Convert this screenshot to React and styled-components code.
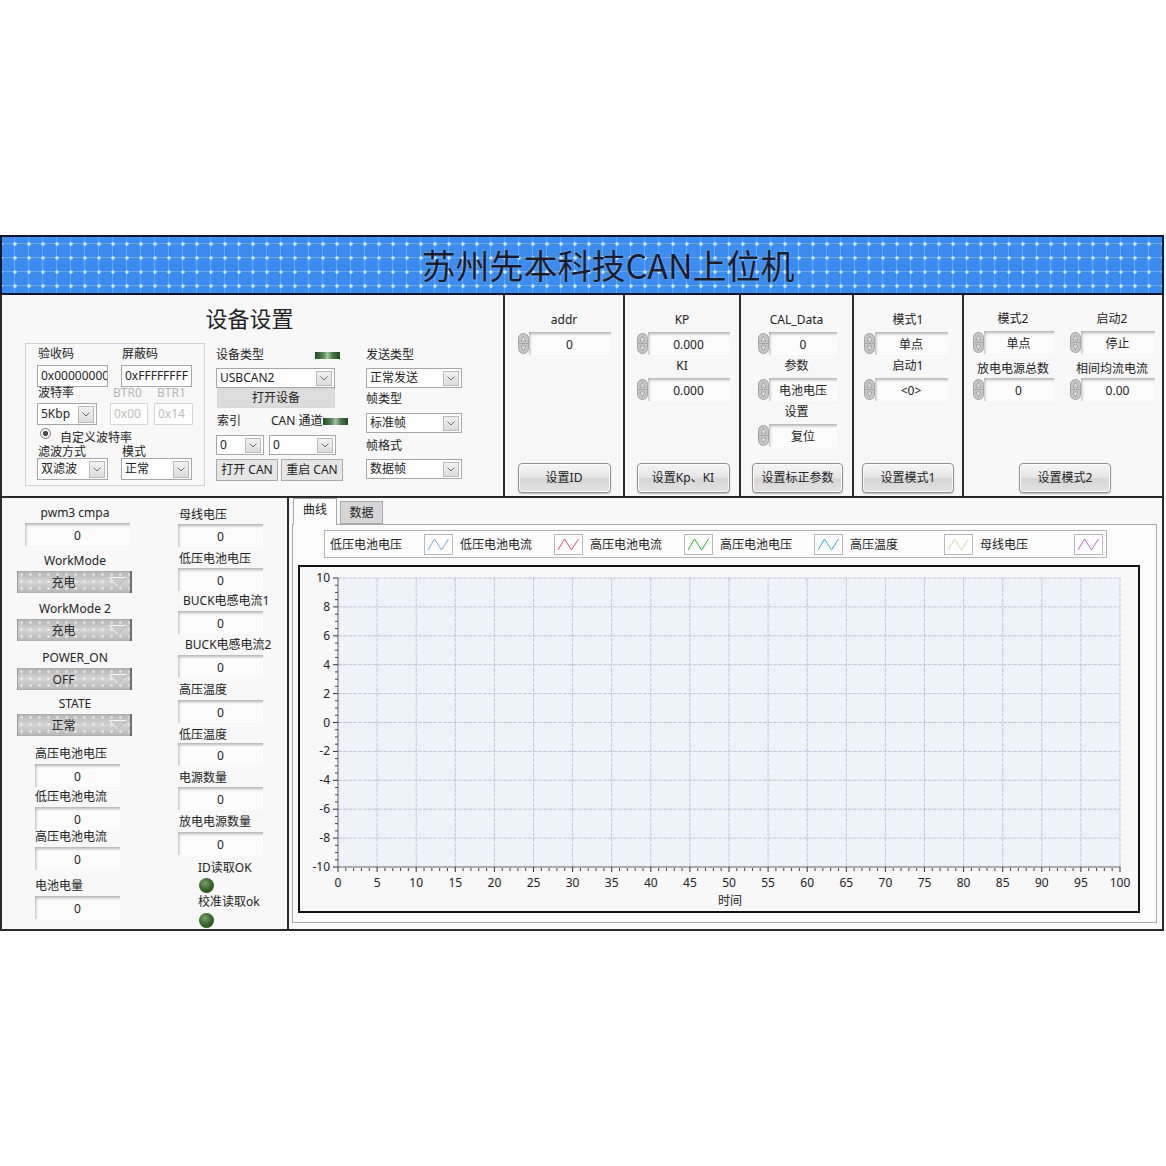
import React from 'react';
import styled, { createGlobalStyle } from 'styled-components';

const GlobalStyle = createGlobalStyle`
  html, body { margin: 0; padding: 0; background: #ffffff; }
  body {
    font-family: "Noto Sans", "Noto Sans CJK SC", sans-serif;
    font-size: 12px;
    color: #222;
  }
`;

const LINE = '#2b2b2b';

const Page = styled.div`
  width: 1164px;
  padding-top: 235px;
`;

/* ---------- banner ---------- */
const Banner = styled.header`
  box-sizing: border-box;
  height: 60px;
  border: 2px solid #0f1830;
  background-color: #3b8cee;
  background-image:
    radial-gradient(circle at 7px 7px, rgba(210, 233, 255, 0.95) 1.3px, transparent 2.2px),
    linear-gradient(to bottom, transparent 6.5px, rgba(140, 195, 255, 0.5) 6.5px, rgba(140, 195, 255, 0.5) 7.5px, transparent 7.5px),
    linear-gradient(to right, transparent 6.5px, rgba(140, 195, 255, 0.5) 6.5px, rgba(140, 195, 255, 0.5) 7.5px, transparent 7.5px);
  background-size: 14px 14px;
  background-position: 6px 0;
  display: flex;
  align-items: center;
  justify-content: center;
  padding-left: 52px;
`;

const BannerTitle = styled.h1`
  margin: 0;
  font-family: "Noto Sans CJK SC", sans-serif;
  font-weight: 400;
  font-size: 34px;
  line-height: 40px;
  color: #1a1c2c;
  text-shadow: 0 0 2px rgba(200, 225, 255, 0.6);
`;

/* ---------- panels ---------- */
const TopRow = styled.div`
  display: grid;
  grid-template-columns: 505px 120px 116px 113px 110px 200px;
  height: 203px;
`;

const BottomRow = styled.div`
  display: grid;
  grid-template-columns: 289px 875px;
  height: 433px;
`;

const Panel = styled.section`
  box-sizing: border-box;
  background: #f8f8f8;
  border-right: 2px solid ${LINE};
  border-bottom: 2px solid ${LINE};
  border-left: ${p => (p.$first ? `2px solid ${LINE}` : 'none')};
  min-width: 0;
`;

const Label = styled.div`
  font-size: 12px;
  line-height: ${p => p.$lh || 14}px;
  white-space: nowrap;
  color: ${p => (p.$muted ? '#b6b6b6' : '#222')};
  margin-top: ${p => p.$mt || 0}px;
  margin-left: ${p => p.$ml || 0}px;
  padding-left: ${p => p.$pl || 0}px;
`;

/* ---------- device settings ---------- */
const DevicePanel = styled(Panel)``;

const PanelTitle = styled.h2`
  margin: 0;
  height: 48px;
  font-size: 22px;
  font-weight: 400;
  line-height: 44px;
  text-align: center;
  padding-right: 6px;
  font-family: "Noto Sans CJK SC", sans-serif;
`;

const DeviceBody = styled.div`
  display: flex;
  align-items: flex-start;
  padding-left: 23px;
`;

const GroupBox = styled.div`
  box-sizing: border-box;
  width: 180px;
  height: 143px;
  border: 1px solid #d2d2d2;
  padding: 3px 0 0 11px;
`;

const PairRow = styled.div`
  display: grid;
  grid-template-columns: ${p => p.$cols || '71px 71px'};
  column-gap: ${p => p.$gap ?? 13}px;
  margin-top: ${p => p.$mt || 0}px;
  align-items: start;
`;

const TextBox = styled.div`
  box-sizing: border-box;
  width: ${p => p.$w}px;
  height: 22px;
  border: 1px solid ${p => (p.$muted ? '#d6d6d6' : '#a6a6a6')};
  background: #fff;
  padding-left: 3px;
  font-size: 12px;
  line-height: 20px;
  white-space: nowrap;
  overflow: hidden;
  color: ${p => (p.$muted ? '#bdbdbd' : '#222')};
`;

const ComboBox = styled.div`
  box-sizing: border-box;
  width: ${p => p.$w}px;
  height: ${p => p.$h || 20}px;
  border: 1px solid #a6a6a6;
  background: #fff;
  display: flex;
  align-items: center;
  justify-content: space-between;
  padding: 0 2px 0 3px;
  font-size: 12px;
  line-height: 14px;
  white-space: nowrap;
  overflow: hidden;
  margin-top: ${p => p.$mt || 0}px;
`;

const ComboArrow = styled.span`
  box-sizing: border-box;
  flex: none;
  width: 16px;
  height: ${p => p.$h || 15}px;
  border: 1px solid #b9b9b9;
  background: linear-gradient(#f2f2f2, #dcdcdc);
  display: flex;
  align-items: center;
  justify-content: center;
`;

const Combo = ({ w, h, mt, children }) => (
  <ComboBox $w={w} $h={h} $mt={mt}>
    <span>{children}</span>
    <ComboArrow $h={h && h > 20 ? 17 : 15}>
      <svg width="8" height="5" viewBox="0 0 8 5">
        <path d="M0.5 0.5 L4 4 L7.5 0.5" fill="none" stroke="#6d6d6d" strokeWidth="1" />
      </svg>
    </ComboArrow>
  </ComboBox>
);

const RadioRow = styled.div`
  display: flex;
  align-items: flex-start;
  margin-top: 3px;
  margin-left: 3px;
  height: 17px;
`;

const RadioDot = styled.span`
  box-sizing: border-box;
  width: 11px;
  height: 11px;
  border-radius: 50%;
  border: 1px solid #7a7a7a;
  background: radial-gradient(circle, #4a4a4a 0 2.4px, #f4f4f4 2.9px);
`;

const DevCol = styled.div`
  width: ${p => p.$w}px;
  margin-left: ${p => p.$ml}px;
  padding-top: ${p => p.$pt}px;
  display: flex;
  flex-direction: column;
`;

const LabelLine = styled.div`
  display: flex;
  align-items: center;
  height: 14px;
  margin-top: ${p => p.$mt || 0}px;
`;

const BarLed = styled.span`
  width: 25px;
  height: 7px;
  margin-left: ${p => p.$ml}px;
  background: linear-gradient(90deg, #1e4a1e, #5f8a5f 35%, #a6c4a6 50%, #4d784d 70%, #1e4a1e);
`;

const FlatButton = styled.div`
  box-sizing: border-box;
  width: ${p => p.$w}px;
  height: ${p => p.$h || 22}px;
  margin-left: ${p => p.$ml || 0}px;
  border: 1px solid ${p => (p.$soft ? '#d8d8d8' : '#a9a9a9')};
  background: ${p => (p.$soft ? '#dcdcdc' : '#e6e6e6')};
  text-align: center;
  font-size: 12px;
  line-height: ${p => (p.$h || 22) - 2}px;
  white-space: nowrap;
`;

const InlineRow = styled.div`
  display: flex;
  gap: ${p => p.$gap}px;
  margin-top: ${p => p.$mt || 0}px;
`;

/* ---------- spinners & silver buttons ---------- */
const SpinPanel = styled(Panel)`
  display: flex;
  flex-direction: column;
  align-items: center;
  padding-top: 18px;
`;

const SplitPanel = styled(Panel)`
  display: flex;
  flex-direction: column;
  align-items: center;
  padding-top: 17px;
`;

const SplitCols = styled.div`
  display: grid;
  grid-template-columns: 98px 100px;
  align-self: stretch;
`;

const SpinGroup = styled.div`
  display: flex;
  flex-direction: column;
  align-items: center;
  margin-top: ${p => p.$mt || 0}px;
`;

const SpinWrap = styled.div`
  display: flex;
  width: ${p => p.$w}px;
  height: 23px;
  margin-top: ${p => p.$gap ?? 5}px;
  margin-left: ${p => p.$ml || 0}px;
`;

const SpinValue = styled.div`
  flex: 1;
  height: 23px;
  background: #fcfcfc;
  box-shadow: inset 3px 4px 3px -2px #b3b3b3;
  text-align: center;
  font-size: 12px;
  line-height: 25px;
  white-space: nowrap;
`;

const IncDec = () => (
  <svg width="11" height="21" viewBox="0 0 11 21" style={{ flex: 'none', marginTop: 1 }}>
    <rect x="0.5" y="0.5" width="10" height="20" rx="5" fill="#c6c6c6" stroke="#a3a3a3" />
    <path d="M1 10.5 H10" stroke="#9c9c9c" strokeWidth="0.8" />
    <path d="M3.2 8 L5.5 3.2 L7.8 8 Z" fill="#eeeeee" stroke="#8c8c8c" strokeWidth="0.7" />
    <path d="M3.2 13 L5.5 17.8 L7.8 13 Z" fill="#eeeeee" stroke="#8c8c8c" strokeWidth="0.7" />
  </svg>
);

const Spinner = ({ label, value, w, mt, ml, gap }) => (
  <SpinGroup $mt={mt}>
    <Label>{label}</Label>
    <SpinWrap $w={w} $ml={ml} $gap={gap}>
      <IncDec />
      <SpinValue>{value}</SpinValue>
    </SpinWrap>
  </SpinGroup>
);

const PanelFoot = styled.div`
  margin-top: auto;
  margin-bottom: 3px;
  margin-left: ${p => p.$ml || 0}px;
`;

const SilverButton = styled.div`
  box-sizing: border-box;
  width: ${p => p.$w}px;
  height: 30px;
  border: 1px solid #8f8f8f;
  border-radius: 4px;
  background: linear-gradient(#f6f6f6 0%, #e6e6e6 45%, #d6d6d6 55%, #e3e3e3 100%);
  box-shadow: inset 0 0 0 1px #ffffff, 0 1px 1px rgba(0, 0, 0, 0.25);
  text-align: center;
  font-size: 12px;
  line-height: 28px;
  white-space: nowrap;
`;

/* ---------- readouts (bottom left) ---------- */
const ReadoutPanel = styled(Panel)`
  display: flex;
  padding-left: 15px;
`;

const StackCol = styled.div`
  display: flex;
  flex-direction: column;
  align-items: flex-start;
  width: ${p => p.$w}px;
  margin-left: ${p => p.$ml || 0}px;
  padding-top: ${p => p.$pt || 0}px;
`;

const CenterLabel = styled(Label)`
  align-self: center;
`;

const Readout = styled.div`
  box-sizing: border-box;
  width: ${p => p.$w}px;
  height: 23px;
  margin-top: ${p => p.$mt || 0}px;
  margin-left: ${p => p.$ml || 0}px;
  background: #fcfcfc;
  box-shadow: inset 3px 4px 3px -2px #b3b3b3;
  text-align: center;
  line-height: 25px;
  font-size: 12px;
`;

const Ring = styled.div`
  box-sizing: border-box;
  display: flex;
  align-items: center;
  width: 115px;
  height: 22px;
  margin-top: ${p => p.$mt || 0}px;
  background:
    radial-gradient(circle, rgba(255, 255, 255, 0.5) 1px, transparent 1.8px) 0 0 / 9px 7px,
    linear-gradient(#b3b3b3, #d4d4d4 50%, #b6b6b6);
  box-shadow: inset -2px 0 1px #6a6a6a, inset 1px 0 0 #9a9a9a;
  font-size: 12px;
`;

const RingText = styled.span`
  flex: 1;
  text-align: center;
  padding-left: 2px;
`;

const RingArrow = () => (
  <svg width="20" height="12" viewBox="0 0 20 12" style={{ marginRight: 4 }}>
    <path d="M1.5 1.5 H18.5 L10 10.5 Z" fill="#c9c9c9" stroke="#f6f6f6" strokeWidth="1" />
    <path d="M18.5 1.5 L10 10.5" stroke="#8a8a8a" strokeWidth="0.7" />
  </svg>
);

const Ringed = ({ value, mt }) => (
  <Ring $mt={mt}>
    <RingText>{value}</RingText>
    <RingArrow />
  </Ring>
);

const RoundLed = styled.span`
  width: 15px;
  height: 15px;
  border-radius: 50%;
  margin-top: ${p => p.$mt || 0}px;
  margin-left: ${p => p.$ml || 0}px;
  background: radial-gradient(circle at 40% 35%, #78a267 0, #3b6a2e 45%, #193d14 100%);
`;

/* ---------- graph panel ---------- */
const GraphPanel = styled(Panel)`
  display: flex;
  flex-direction: column;
  padding: 0 5px 6px 3px;
`;

const TabStrip = styled.div`
  display: flex;
  align-items: flex-end;
  height: 26px;
`;

const Tab = styled.div`
  box-sizing: border-box;
  position: relative;
  z-index: 1;
  width: ${p => p.$w}px;
  height: ${p => (p.$active ? 27 : 23)}px;
  margin-left: ${p => p.$ml}px;
  margin-bottom: ${p => (p.$active ? -1 : 0)}px;
  border: 1px solid #a9a9a9;
  border-bottom: ${p => (p.$active ? 'none' : '1px solid #a9a9a9')};
  background: ${p => (p.$active ? '#fbfbfb' : '#d6d6d6')};
  text-align: center;
  font-size: 12px;
  line-height: 22px;
`;

const TabBody = styled.div`
  flex: 1;
  box-sizing: border-box;
  border: 1px solid #a9a9a9;
  background: #fbfbfb;
`;

const Legend = styled.div`
  box-sizing: border-box;
  display: flex;
  align-items: center;
  width: 783px;
  height: 28px;
  margin: 5px 0 0 31px;
  padding-left: 5px;
  border: 1px solid #b3b3b3;
  background: #fdfdfd;
`;

const LegendItem = styled.div`
  display: flex;
  align-items: center;
  width: 130px;
  flex: none;
`;

const LegendText = styled.span`
  width: 94px;
  font-size: 12px;
  white-space: nowrap;
`;

const Swatch = styled.span`
  box-sizing: border-box;
  width: 29px;
  height: 21px;
  border: 1px solid #b8b8b8;
  background: #ffffff;
  display: flex;
`;

const GraphFrame = styled.div`
  box-sizing: border-box;
  width: 842px;
  height: 348px;
  margin: 7px 0 0 5px;
  border: 2px solid #141414;
  background: #f8f8f8;
`;

const legend = [
  ['低压电池电压', '#7ea6d6'],
  ['低压电池电流', '#d25a6a'],
  ['高压电池电流', '#2fb52f'],
  ['高压电池电压', '#3aaed2'],
  ['高压温度', '#c6e4a0'],
  ['母线电压', '#b468c6'],
];

const PX = 38;
const PY = 11;
const PW = 782;
const PH = 289;

function Chart() {
  const cols = Array.from({ length: 21 }, (_, i) => i);
  const rows = Array.from({ length: 11 }, (_, i) => i);
  const minorX = Array.from({ length: 101 }, (_, i) => i).filter(i => i % 5 !== 0);
  const minorY = Array.from({ length: 41 }, (_, i) => i).filter(i => i % 4 !== 0);
  const txt = { fontFamily: '"Noto Sans", sans-serif', fontSize: 12, fill: '#222' };
  return (
    <svg width="838" height="344" viewBox="0 0 838 344" style={{ display: 'block' }}>
      <rect x={PX} y={PY} width={PW} height={PH} fill="#eef3f9" />
      {cols.map(i => (
        <line key={'v' + i} x1={PX + (i * PW) / 20} x2={PX + (i * PW) / 20} y1={PY} y2={PY + PH}
          stroke="#c3c6dc" strokeWidth="1" strokeDasharray="4 1" />
      ))}
      {rows.map(i => (
        <line key={'h' + i} x1={PX} x2={PX + PW} y1={PY + (i * PH) / 10} y2={PY + (i * PH) / 10}
          stroke="#c3c6dc" strokeWidth="1" strokeDasharray="4 1" />
      ))}
      <line x1={PX} x2={PX} y1={PY} y2={PY + PH} stroke="#777" strokeWidth="1" />
      <line x1={PX} x2={PX + PW} y1={PY + PH} y2={PY + PH} stroke="#777" strokeWidth="1" />
      {rows.map(i => (
        <g key={'yl' + i}>
          <line x1={PX - 5} x2={PX} y1={PY + (i * PH) / 10} y2={PY + (i * PH) / 10} stroke="#333" />
          <text x={PX - 8} y={PY + (i * PH) / 10 + 4} textAnchor="end" style={txt}>{10 - i * 2}</text>
        </g>
      ))}
      {minorY.map(i => (
        <line key={'my' + i} x1={PX - 3} x2={PX} y1={PY + (i * PH) / 40} y2={PY + (i * PH) / 40} stroke="#444" />
      ))}
      {cols.map(i => (
        <g key={'xl' + i}>
          <line x1={PX + (i * PW) / 20} x2={PX + (i * PW) / 20} y1={PY + PH} y2={PY + PH + 5} stroke="#333" />
          <text x={PX + (i * PW) / 20} y={PY + PH + 20} textAnchor="middle" style={txt}>{i * 5}</text>
        </g>
      ))}
      {minorX.map(i => (
        <line key={'mx' + i} x1={PX + (i * PW) / 100} x2={PX + (i * PW) / 100} y1={PY + PH + 1} y2={PY + PH + 4} stroke="#444" />
      ))}
      <text x={430} y={338} textAnchor="middle" style={{ ...txt, fontFamily: '"Noto Sans CJK SC", sans-serif' }}>时间</text>
    </svg>
  );
}

export default function App() {
  return (
    <Page>
      <GlobalStyle />
      <Banner>
        <BannerTitle>苏州先本科技CAN上位机</BannerTitle>
      </Banner>

      <TopRow>
        <DevicePanel $first>
          <PanelTitle>设备设置</PanelTitle>
          <DeviceBody>
            <GroupBox>
              <PairRow>
                <Label $pl={1}>验收码</Label>
                <Label $pl={1}>屏蔽码</Label>
              </PairRow>
              <PairRow $mt={4}>
                <TextBox $w={71}>0x00000000</TextBox>
                <TextBox $w={71}>0xFFFFFFFF</TextBox>
              </PairRow>
              <PairRow $cols="73px 44px 39px" $gap={0} $mt={-1}>
                <Label $pl={1}>波特率</Label>
                <Label $muted $pl={3}>BTR0</Label>
                <Label $muted $pl={3}>BTR1</Label>
              </PairRow>
              <PairRow $cols="73px 44px 39px" $gap={0} $mt={3}>
                <Combo w={60} h={22}>5Kbp</Combo>
                <TextBox $w={38} $muted>0x00</TextBox>
                <TextBox $w={39} $muted>0x14</TextBox>
              </PairRow>
              <RadioRow>
                <RadioDot />
                <Label $ml={9} $mt={4} $lh={12}>自定义波特率</Label>
              </RadioRow>
              <PairRow $mt={1}>
                <Label $pl={1} $lh={12}>滤波方式</Label>
                <Label $pl={1} $lh={12}>模式</Label>
              </PairRow>
              <PairRow $mt={0}>
                <Combo w={71} h={22}>双滤波</Combo>
                <Combo w={71} h={22}>正常</Combo>
              </PairRow>
            </GroupBox>

            <DevCol $w={132} $ml={11} $pt={5}>
              <LabelLine>
                <Label>设备类型</Label>
                <BarLed $ml={51} />
              </LabelLine>
              <Combo w={119} mt={6}>USBCAN2</Combo>
              <FlatButton $w={118} $h={20} $ml={1} $soft>打开设备</FlatButton>
              <LabelLine $mt={6}>
                <Label $ml={1}>索引</Label>
                <Label $ml={30}>CAN 通道</Label>
                <BarLed $ml={0} />
              </LabelLine>
              <InlineRow $gap={5} $mt={7}>
                <Combo w={48}>0</Combo>
                <Combo w={67}>0</Combo>
              </InlineRow>
              <InlineRow $gap={3} $mt={4}>
                <FlatButton $w={62}>打开 CAN</FlatButton>
                <FlatButton $w={62}>重启 CAN</FlatButton>
              </InlineRow>
            </DevCol>

            <DevCol $w={96} $ml={18} $pt={5}>
              <Label>发送类型</Label>
              <Combo w={96} mt={6}>正常发送</Combo>
              <Label $mt={4}>帧类型</Label>
              <Combo w={96} mt={7}>标准帧</Combo>
              <Label $mt={6}>帧格式</Label>
              <Combo w={96} mt={6}>数据帧</Combo>
            </DevCol>
          </DeviceBody>
        </DevicePanel>

        <SpinPanel>
          <Spinner label="addr" value="0" w={93} />
          <PanelFoot><SilverButton $w={93}>设置ID</SilverButton></PanelFoot>
        </SpinPanel>

        <SpinPanel>
          <Spinner label="KP" value="0.000" w={93} ml={2} />
          <Spinner label="KI" value="0.000" w={93} ml={2} mt={4} />
          <PanelFoot $ml={2}><SilverButton $w={93}>设置Kp、KI</SilverButton></PanelFoot>
        </SpinPanel>

        <SpinPanel>
          <Spinner label="CAL_Data" value="0" w={79} ml={2} />
          <Spinner label="参数" value="电池电压" w={79} ml={2} mt={4} />
          <Spinner label="设置" value="复位" w={79} ml={2} mt={4} />
          <PanelFoot $ml={2}><SilverButton $w={91}>设置标正参数</SilverButton></PanelFoot>
        </SpinPanel>

        <SpinPanel>
          <Spinner label="模式1" value="单点" w={84} ml={-5} />
          <Spinner label="启动1" value="<0>" w={84} ml={-5} mt={4} />
          <PanelFoot><SilverButton $w={92}>设置模式1</SilverButton></PanelFoot>
        </SpinPanel>

        <SplitPanel>
          <SplitCols>
            <SpinGroup>
              <Spinner label="模式2" value="单点" w={81} />
              <Spinner label="放电电源总数" value="0" w={81} mt={8} gap={2} />
            </SpinGroup>
            <SpinGroup>
              <Spinner label="启动2" value="停止" w={85} />
              <Spinner label="相间均流电流" value="0.00" w={85} mt={8} gap={2} />
            </SpinGroup>
          </SplitCols>
          <PanelFoot $ml={4}><SilverButton $w={92}>设置模式2</SilverButton></PanelFoot>
        </SplitPanel>
      </TopRow>

      <BottomRow>
        <ReadoutPanel $first>
          <StackCol $w={116} $pt={8}>
            <CenterLabel>pwm3 cmpa</CenterLabel>
            <Readout $w={105} $ml={8} $mt={3}>0</Readout>
            <CenterLabel $mt={8}>WorkMode</CenterLabel>
            <Ringed value="充电" mt={3} />
            <CenterLabel $mt={9}>WorkMode 2</CenterLabel>
            <Ringed value="充电" mt={3} />
            <CenterLabel $mt={10}>POWER_ON</CenterLabel>
            <Ringed value="OFF" mt={3} />
            <CenterLabel $mt={7}>STATE</CenterLabel>
            <Ringed value="正常" mt={3} />
            <Label $ml={18} $mt={11}>高压电池电压</Label>
            <Readout $w={85} $ml={18} $mt={3}>0</Readout>
            <Label $ml={18} $mt={3}>低压电池电流</Label>
            <Readout $w={85} $ml={18} $mt={3}>0</Readout>
            <Label $ml={18} $mt={0}>高压电池电流</Label>
            <Readout $w={85} $ml={18} $mt={3}>0</Readout>
            <Label $ml={18} $mt={9}>电池电量</Label>
            <Readout $w={85} $ml={18} $mt={3}>0</Readout>
          </StackCol>

          <StackCol $w={100} $ml={45} $pt={10}>
            <Label $ml={1}>母线电压</Label>
            <Readout $w={85} $mt={2}>0</Readout>
            <Label $ml={1} $mt={5}>低压电池电压</Label>
            <Readout $w={85} $mt={2}>0</Readout>
            <Label $ml={5} $mt={3}>BUCK电感电流1</Label>
            <Readout $w={85} $mt={3}>0</Readout>
            <Label $ml={7} $mt={4}>BUCK电感电流2</Label>
            <Readout $w={85} $mt={3}>0</Readout>
            <Label $ml={1} $mt={5}>高压温度</Label>
            <Readout $w={85} $mt={3}>0</Readout>
            <Label $ml={1} $mt={5}>低压温度</Label>
            <Readout $w={85} $mt={1}>0</Readout>
            <Label $ml={1} $mt={5}>电源数量</Label>
            <Readout $w={85} $mt={2}>0</Readout>
            <Label $ml={1} $mt={5}>放电电源数量</Label>
            <Readout $w={85} $mt={3}>0</Readout>
            <Label $ml={20} $mt={6}>ID读取OK</Label>
            <RoundLed $ml={21} $mt={3} />
            <Label $ml={20} $mt={2}>校准读取ok</Label>
            <RoundLed $ml={21} $mt={4} />
          </StackCol>
        </ReadoutPanel>

        <GraphPanel>
          <TabStrip>
            <Tab $active $w={44} $ml={1}>曲线</Tab>
            <Tab $w={43} $ml={3}>数据</Tab>
          </TabStrip>
          <TabBody>
            <Legend>
              {legend.map(([name, color]) => (
                <LegendItem key={name}>
                  <LegendText>{name}</LegendText>
                  <Swatch>
                    <svg width="27" height="19" viewBox="0 0 27 19">
                      <path d="M3 15 L9.5 4 L16.5 15 L23.5 4" fill="none" stroke={color} strokeWidth="1" />
                    </svg>
                  </Swatch>
                </LegendItem>
              ))}
            </Legend>
            <GraphFrame>
              <Chart />
            </GraphFrame>
          </TabBody>
        </GraphPanel>
      </BottomRow>
    </Page>
  );
}
